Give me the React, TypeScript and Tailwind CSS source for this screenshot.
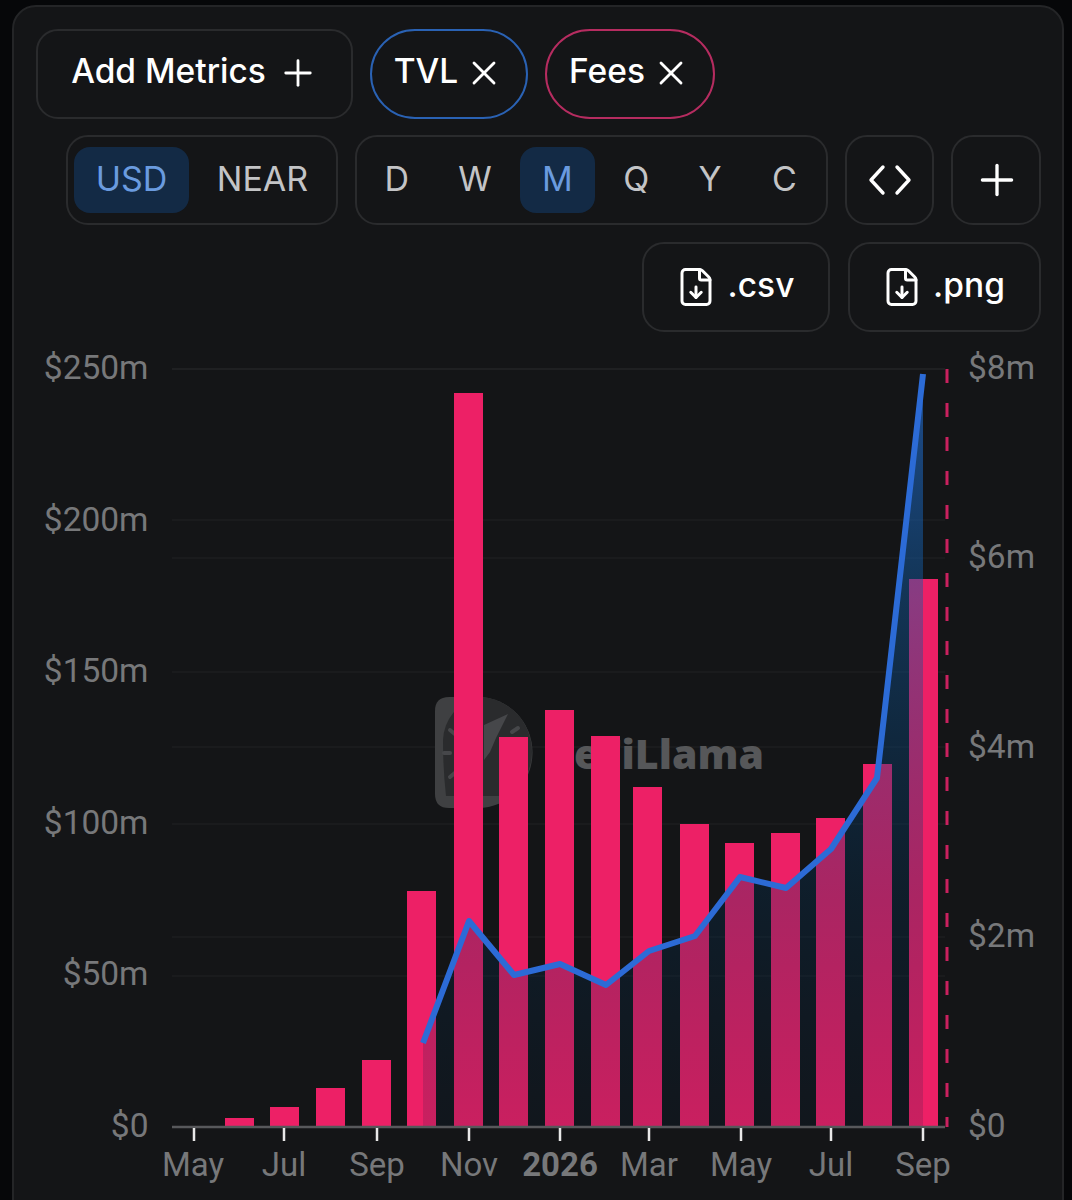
import React from "react";
import { FileDown, Plus, X } from "lucide-react";

const btn = "flex items-center justify-center rounded-[22px] border-2 border-[#2a2b2d] h-[90px]";

const bars = [
  [225, 1118], [270, 1107], [316, 1088], [362, 1060], [407, 891], [454, 393], [499, 737], [545, 710],
  [591, 736], [633, 787], [680, 824], [725, 843], [771, 833], [816, 818], [863, 764], [909, 579],
];

const line = "423,1043 469,921 514,975 560,964 606,985 649,951 695,936 740,877 786,888 831,849 877,778 923,374";
const baseY = 1127;

const leftAxis = [["$250m", 379], ["$200m", 531], ["$150m", 682], ["$100m", 834], ["$50m", 985], ["$0", 1137]] as const;
const rightAxis = [["$8m", 379], ["$6m", 568], ["$4m", 758], ["$2m", 947], ["$0", 1137]] as const;
const months = [["May", 193], ["Jul", 284], ["Sep", 377], ["Nov", 469], ["2026", 560], ["Mar", 649], ["May", 741], ["Jul", 831], ["Sep", 923]] as const;

function Chart() {
  return (
    <svg viewBox="12 340 1052 860" className="block w-[1052px] h-[860px] -ml-[2px] max-w-none" style={{ fontFamily: "Roboto, sans-serif" }}>
      <defs>
        <linearGradient id="tvlFill" gradientUnits="userSpaceOnUse" x1="0" y1="374" x2="0" y2="1127">
          <stop offset="0" stopColor="#2366c4" stopOpacity="0.7" />
          <stop offset="0.3" stopColor="#115aa0" stopOpacity="0.45" />
          <stop offset="0.7" stopColor="#00325a" stopOpacity="0.28" />
          <stop offset="1" stopColor="#001e3c" stopOpacity="0.15" />
        </linearGradient>
      </defs>

      {[369, 520, 558, 672, 747, 824, 937, 976].map((y) => (
        <line key={y} x1="172" x2="945" y1={y} y2={y} stroke={y === 369 ? "#1f2022" : "#1a1b1d"} strokeWidth="2" />
      ))}

      {/* watermark */}
      <path d="M449 697 H478 A54 55 0 0 1 478 808 H449 Q435 808 435 794 V711 Q435 697 449 697 Z" fill="#3f4042" />
      <path d="M443 740 A46 46 0 0 1 478 697 A54 55 0 0 1 532 752 A54 55 0 0 1 510 796 H446 Q443 770 443 740 Z" fill="#2a2b2d" />
      <g stroke="#46474a" strokeWidth="4" strokeLinecap="round" fill="none">
        <path d="M450 730 L456 735" />
        <path d="M444 753 L450 753" />
        <path d="M450 777 L456 772" />
        <path d="M512 732 L518 728" />
      </g>
      <path d="M484 725 L508 714 L496 738 L490 752 L484 760 Z" fill="#46474a" />
      <text x="544" y="769" fontFamily="'Open Sans', sans-serif" fontWeight="800" fontSize="41" fill="#565759">DeFiLlama</text>

      {bars.map(([x, y]) => (
        <rect key={x} x={x} y={y} width="29" height={baseY - y} fill="#ed2066" />
      ))}

      <polygon points={`423,${baseY} ${line} 923,${baseY}`} fill="url(#tvlFill)" />
      <polyline points={line} fill="none" stroke="#2c6bd6" strokeWidth="6" strokeLinejoin="round" />

      <line x1="947" x2="947" y1="369" y2="1127" stroke="#c9215f" strokeWidth="3" strokeDasharray="14 20" />
      <line x1="172" x2="945" y1={baseY} y2={baseY} stroke="#57585b" strokeWidth="2.5" />

      {months.map(([m, x]) => (
        <g key={`${m}${x}`}>
          <line x1={x + (x === 193 ? 1 : 0)} x2={x + (x === 193 ? 1 : 0)} y1="1128" y2="1141" stroke="#e8e8e8" strokeWidth="2.5" />
          <text x={x} y="1176" textAnchor="middle" fontSize="33" fontWeight={m === "2026" ? 700 : 400} fill="#77787a">{m}</text>
        </g>
      ))}

      {leftAxis.map(([t, y]) => (
        <text key={t} x="148.5" y={y} textAnchor="end" fontSize="33.5" fill="#77787a">{t}</text>
      ))}
      {rightAxis.map(([t, y]) => (
        <text key={t} x="968" y={y} fontSize="33.5" fill="#77787a">{t}</text>
      ))}
    </svg>
  );
}

export default function App() {
  return (
    <div className="h-[1200px] w-[1072px] overflow-hidden bg-[#060709] pl-3 pt-[5px] pr-2" style={{ fontFamily: "Inter, sans-serif" }}>
      <div className="h-[1200px] w-[1052px] rounded-t-[24px] border-2 border-[#242527] bg-[#141517]">
        {/* metrics row */}
        <div className="ml-[22px] mt-[22px] flex gap-[17px]">
          <button className={`${btn} w-[317px] gap-[19px] pr-[7px] text-[33.5px] font-medium text-white`}>
            <span className="pb-[5px]">Add Metrics</span>
            <Plus size={42} strokeWidth={1.6} className="-mx-2 -mt-[2px]" />
          </button>
          <button className="flex h-[90px] w-[158px] items-center justify-center gap-[14px] rounded-[45px] border-2 border-[#2a62b4] pr-[8px] text-[33.5px] font-medium text-white">
            <span className="pb-[5px]">TVL</span>
            <X size={40} strokeWidth={1.7} className="-mx-2 -mt-[2px]" />
          </button>
          <button className="flex h-[90px] w-[170px] items-center justify-center gap-[14px] rounded-[45px] border-2 border-[#b62c60] pr-[8px] text-[33.5px] font-medium text-white">
            <span className="pb-[5px]">Fees</span>
            <X size={40} strokeWidth={1.7} className="-mx-2 -mt-[2px]" />
          </button>
        </div>

        {/* denomination and grouping */}
        <div className="ml-[52px] mt-[16px] flex gap-[17px] text-[34px] text-[#c3c4c6]">
          <div className={`${btn} w-[272px] justify-start gap-0 pl-[6px]`}>
            <span className="flex h-[66px] w-[115px] items-center justify-center rounded-[16px] bg-[#132a45] pb-[4px] text-[#6a9bdf]">USD</span>
            <span className="w-[147px] pb-[4px] text-center">NEAR</span>
          </div>
          <div className={`${btn} w-[473px] justify-start`}>
            <span className="w-[80px] pb-[4px] text-center">D</span>
            <span className="w-[78px] pb-[4px] text-center">W</span>
            <span className="ml-[6px] flex h-[66px] w-[76px] items-center justify-center rounded-[16px] bg-[#132a45] pb-[4px] text-[#6a9bdf]">M</span>
            <span className="w-[83px] pb-[4px] text-center">Q</span>
            <span className="w-[66px] pb-[4px] text-center">Y</span>
            <span className="w-[84px] pb-[4px] text-center">C</span>
          </div>
          <button className={`${btn} w-[89px] pb-[1px]`}>
            <svg width="44" height="32" viewBox="0 0 44 32" fill="none" stroke="white" strokeWidth="3.4" strokeLinecap="round" strokeLinejoin="round">
              <path d="M15 3 L3 16 L15 29" />
              <path d="M29 3 L41 16 L29 29" />
            </svg>
          </button>
          <button className={`${btn} w-[90px] pl-[1px] text-white`}>
            <Plus size={50} strokeWidth={1.6} />
          </button>
        </div>

        {/* downloads */}
        <div className="mt-[17px] flex justify-end gap-[18px] pr-[21px] text-[33.5px] font-medium text-white">
          <button className={`${btn} w-[188px] gap-[15px] pl-[1px]`}>
            <FileDown size={42} strokeWidth={1.7} className="-mx-1" />
            <span className="pb-[4px]">.csv</span>
          </button>
          <button className={`${btn} w-[193px] gap-[14px] pl-[1px]`}>
            <FileDown size={42} strokeWidth={1.7} className="-mx-1" />
            <span className="pb-[4px]">.png</span>
          </button>
        </div>

        <div className="mt-[8px]">
          <Chart />
        </div>
      </div>
    </div>
  );
}
